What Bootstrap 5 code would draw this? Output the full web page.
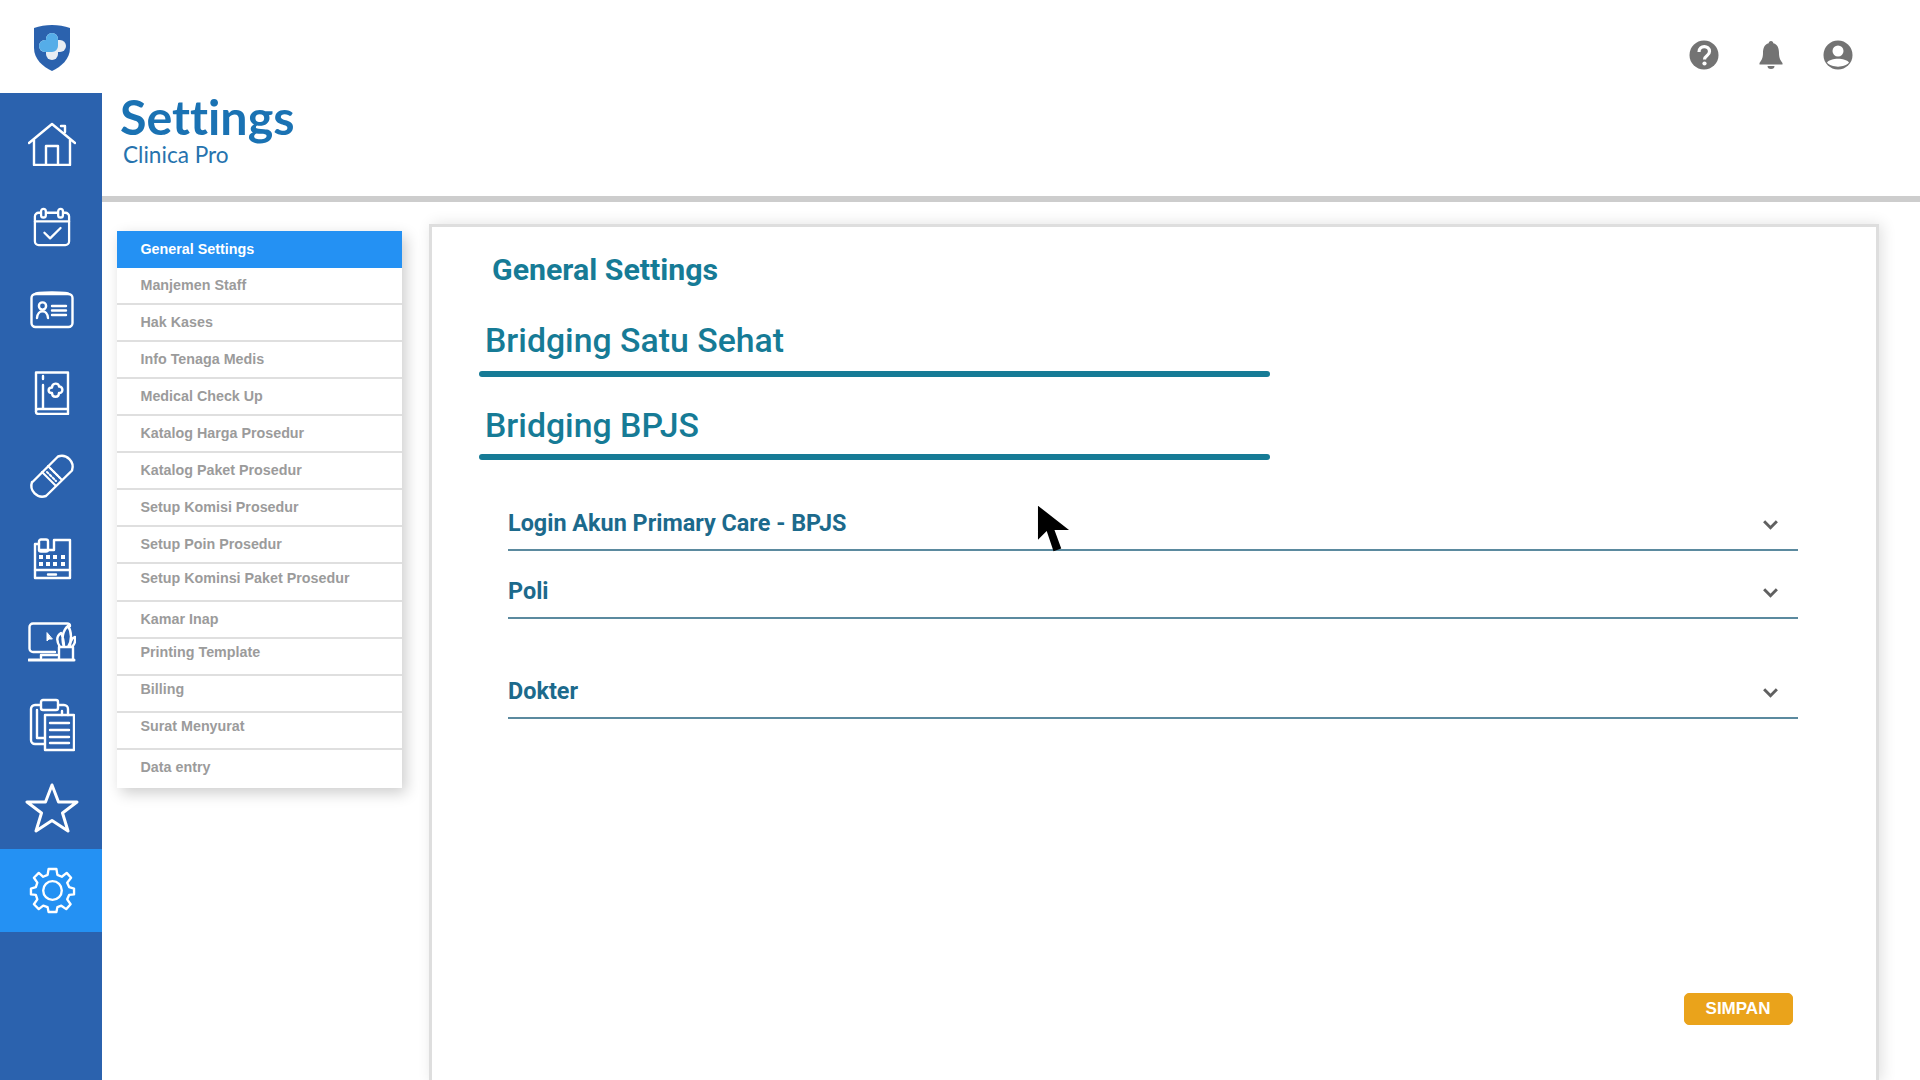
<!DOCTYPE html>
<html lang="id">
<head>
    <meta charset="UTF-8">
    <meta name="viewport" content="width=device-width, initial-scale=1.0">
    <title>Clinica Pro | Settings</title>
    <link href="https://cdn.jsdelivr.net/npm/bootstrap@5.3.0/dist/css/bootstrap.min.css" rel="stylesheet">
    <style>
        body {
            background: #fff;
            font-family: "Liberation Sans", Arial, sans-serif;
        }

        .app-shell {
            height: 1080px;
            overflow: hidden;
        }

        /* top bar */
        .top-bar {
            height: 93px;
        }

        .logo-box {
            width: 102px;
            padding-left: 1px;
        }

        .top-actions {
            gap: 40px;
            padding: 40px 67px 0 0;
        }

        /* left rail */
        .side-rail {
            width: 102px;
            background: #2b62ae;
            padding-top: 9px;
        }

        .rail-item {
            height: 83px;
            padding-left: 2px;
        }

        .rail-item.is-active {
            background: #2491f3;
        }

        .rail-item svg {
            fill: none;
            stroke: #fff;
            stroke-width: 2.4;
            stroke-linejoin: round;
            stroke-linecap: round;
        }

        /* page heading */
        .page-head {
            height: 103px;
            padding-left: 18px;
        }

        .page-title {
            font-family: Lato, sans-serif;
            font-weight: 700;
            font-size: 48.4px;
            line-height: 46px;
            font-variant-ligatures: none;
            color: #1a72b3;
            margin: 0 0 3px;
        }

        .page-sub {
            font-family: Lato, sans-serif;
            font-size: 22.6px;
            line-height: 26px;
            color: #2673ae;
            padding-left: 3px;
        }

        .head-rule {
            height: 6px;
            background: #cdcdcd;
        }

        /* settings menu */
        .settings-menu {
            width: 285px;
            margin: 29px 0 0 15px;
            align-self: flex-start;
            box-shadow: 4px 5px 14px rgba(0, 0, 0, .2);
            --bs-list-group-border-radius: 0;
            --bs-list-group-border-color: #dfdfdf;
        }

        .settings-menu .list-group-item {
            height: 37px;
            padding: 0 0 0 23.5px;
            display: flex;
            align-items: center;
            font-size: 14.3px;
            font-weight: 700;
            color: #9b9b9b;
            border-width: 0 0 2px 0;
        }

        .settings-menu .list-group-item:last-child {
            height: 38px;
            border-bottom: 0;
            padding-bottom: 3px;
        }

        .settings-menu .list-group-item.active {
            background: #2491f3;
            color: #fff;
            border-color: #2491f3;
            padding-top: 2px;
        }

        .settings-menu .list-group-item.item-tall {
            height: 38px;
            padding-bottom: 6px;
        }

        .settings-menu .list-group-item.item-high {
            padding-bottom: 7px;
        }

        /* main panel */
        .main-panel {
            width: 1450px;
            height: 858px;
            margin: 22px 0 0 27px;
            padding: 0 60px 57px 47px;
            border: 3px solid #dedede;
            border-bottom: 0;
            box-shadow: 3px 0 14px rgba(0, 0, 0, .12);
            position: relative;
        }

        .panel-title {
            font-family: Roboto, sans-serif;
            font-weight: 700;
            font-size: 30.3px;
            line-height: 34px;
            color: #167b96;
            margin: 26px 0 0 13px;
        }

        .bridge-title {
            font-family: Roboto, sans-serif;
            font-weight: 500;
            font-size: 33.8px;
            line-height: 40px;
            color: #167b96;
            margin: 0 0 0 6px;
        }

        .bridge-bar {
            width: 791px;
            height: 6px;
            border-radius: 3px;
            background: #167b96;
            margin-top: 10px;
        }

        .bridge-block {
            margin-top: 34px;
        }

        .bridge-block + .bridge-block {
            margin-top: 29px;
        }

        .bridge-block + .bridge-block .bridge-bar {
            margin-top: 8px;
        }

        .set-accordion {
            margin: 22.5px 0 0 29px;
            width: 1290px;
            --bs-accordion-border-width: 0;
            --bs-accordion-border-radius: 0;
            --bs-accordion-inner-border-radius: 0;
            --bs-accordion-btn-padding-x: 0;
            --bs-accordion-btn-padding-y: 0;
            --bs-accordion-btn-color: #1c6a8c;
            --bs-accordion-active-color: #1c6a8c;
            --bs-accordion-active-bg: #fff;
            --bs-accordion-btn-focus-box-shadow: none;
            --bs-accordion-btn-icon-width: 17px;
            --bs-accordion-btn-icon: url("data:image/svg+xml,%3csvg xmlns='http://www.w3.org/2000/svg' viewBox='0 0 16 16'%3e%3cpath fill='none' stroke='%23606060' stroke-width='2.8' d='M2 5l6 6 6-6'/%3e%3c/svg%3e");
            --bs-accordion-btn-active-icon: url("data:image/svg+xml,%3csvg xmlns='http://www.w3.org/2000/svg' viewBox='0 0 16 16'%3e%3cpath fill='none' stroke='%23606060' stroke-width='2.8' d='M2 5l6 6 6-6'/%3e%3c/svg%3e");
        }

        .set-accordion .accordion-button {
            height: 68px;
            font-family: Roboto, sans-serif;
            font-weight: 700;
            font-size: 23.4px;
            padding: 17px 19px 0 0;
            border-bottom: 2px solid #5b8a9f;
            box-shadow: none;
        }

        .set-accordion .accordion-item.item-gap {
            margin-top: 32px;
        }

        .save-btn {
            --bs-btn-bg: #eaa31b;
            --bs-btn-border-color: #eaa31b;
            --bs-btn-color: #fff;
            --bs-btn-hover-bg: #d8950f;
            --bs-btn-hover-border-color: #d8950f;
            --bs-btn-hover-color: #fff;
            width: 109px;
            height: 32px;
            padding: 0;
            font-weight: 700;
            font-size: 17px;
            border-radius: 5px;
            margin-right: 23.5px;
        }

        .mouse-cursor {
            position: absolute;
            left: 605px;
            top: 278px;
        }
    </style>
</head>
<body>
<div class="app-shell d-flex flex-column">
    <!-- top bar -->
    <header class="top-bar d-flex flex-shrink-0">
        <div class="logo-box d-flex justify-content-center align-items-start pt-4">
            <svg width="38" height="48" viewBox="0 0 38 48">
                <path d="M1 4C12 0 26 0 37 4V24C37 35 28 43 19 47 10 43 1 35 1 24Z" fill="#2b62ae"/>
                <rect x="6" y="16" width="27" height="12" rx="6" fill="#e8edf3"/>
                <rect x="13" y="9" width="12" height="27" rx="6" fill="#e8edf3"/>
                <path d="M12 28a6 6 0 0 1 0-12h1V15a6 6 0 0 1 12 0V22a6 6 0 0 1-6 6Z" fill="#55ade8"/>
            </svg>
        </div>
        <div class="top-actions d-flex ms-auto align-items-center align-self-start">
            <svg width="30" height="30" viewBox="0 0 30 30">
                <circle cx="15" cy="15" r="14.5" fill="#737373"/>
                <path d="M10 12c0-7 10.5-7 10.5-.5 0 4.5-5 4-5 8" fill="none" stroke="#fff" stroke-width="3.2"/>
                <circle cx="15.5" cy="23.5" r="2.1" fill="#fff"/>
            </svg>
            <svg width="24" height="30" viewBox="0 0 24 30">
                <path d="M12 1c1.500 0 2.300 1 2.300 2.300C19 4.500 20 9 20 13c0 5 1.500 7.500 3.500 10v1.500H.5V23C2.500 20.500 4 18 4 13c0-4 1-8.500 5.700-9.700C9.700 2 10.500 1 12 1Z" fill="#737373"/>
                <path d="M8.500 26h7a3.500 3 0 0 1-7 0Z" fill="#737373"/>
            </svg>
            <svg width="30" height="30" viewBox="0 0 30 30">
                <circle cx="15" cy="15" r="14.5" fill="#737373"/>
                <circle cx="15" cy="11" r="5.5" fill="#fff"/>
                <path d="M4 22.500C8 17.500 22 17.500 26 22.500 22 28 8 28 4 22.500Z" fill="#fff"/>
            </svg>
        </div>
    </header>

    <div class="d-flex flex-grow-1">
        <!-- left rail -->
        <nav class="side-rail flex-shrink-0">
            <div class="rail-item d-flex align-items-center justify-content-center">
                <svg width="48" height="44" viewBox="0 0 48 44">
                    <path d="M1 21 24 2 47 21M6 18V43H42V18M37 10V4H33"/>
                    <path d="M18 43V24H30V43"/>
                </svg>
            </div>
            <div class="rail-item d-flex align-items-center justify-content-center">
                <svg width="38" height="40" viewBox="0 0 40 42">
                    <rect x="2" y="6" width="36" height="34" rx="4"/>
                    <path d="M2 15H38"/>
                    <rect x="8.5" y="2" width="5" height="9" rx="2.5" fill="#2b62ae"/>
                    <rect x="26.5" y="2" width="5" height="9" rx="2.5" fill="#2b62ae"/>
                    <path d="M12 27l6 6 11-11"/>
                </svg>
            </div>
            <div class="rail-item d-flex align-items-center justify-content-center">
                <svg width="44" height="38" viewBox="0 0 44 38">
                    <rect x="1.5" y="3" width="41" height="33" rx="4"/>
                    <path d="M5 3C6 1 38 1 39 3"/>
                    <circle cx="12.5" cy="15" r="3.6"/>
                    <path d="M7 27c.5-9 10.500-9 11 0M22 15H36M22 19.500H36M22 24H36"/>
                </svg>
            </div>
            <div class="rail-item d-flex align-items-center justify-content-center">
                <svg width="36" height="44" viewBox="0 0 36 44">
                    <path d="M2 1.500H34V38H4.500C1 38 1 43 4.500 43H34V38M2 1.500V40"/>
                    <path d="M9 14V37M9 5V8"/>
                    <path d="M18 16.500c0-5 7-5 7-1 4-.5 5 6.500 0 6.500 0 5-7 5-7 0-4.500 0-4.500-5.500 0-5.500Z"/>
                </svg>
            </div>
            <div class="rail-item d-flex align-items-center justify-content-center">
                <svg width="50" height="50" viewBox="0 0 50 50">
                    <path d="M5.500 31 31 5.500a11 11 0 0 1 14 14L19 45a11 11 0 0 1-14-14Z"/>
                    <path d="M15 21 29 35M21 15 35 29" stroke-width="2"/>
                    <path d="M20 21 29 30M23.500 17.500 32.500 26.500" stroke-dasharray="2 2" stroke-width="2"/>
                </svg>
            </div>
            <div class="rail-item d-flex align-items-center justify-content-center">
                <svg width="40" height="42" viewBox="0 0 40 42">
                    <path d="M7 6H3V40H38V2H22V12H7"/>
                    <rect x="7" y="1.5" width="9" height="12" rx="2"/>
                    <path d="M3 32H38M16 36.500H24"/>
                    <g fill="#fff" stroke="none">
                        <rect x="7" y="17" width="4" height="4"/><rect x="14" y="17" width="4" height="4"/><rect x="21" y="17" width="4" height="4"/><rect x="29" y="17" width="4" height="4"/>
                        <rect x="7" y="24" width="4" height="4"/><rect x="14" y="24" width="4" height="4"/><rect x="21" y="24" width="4" height="4"/><rect x="29" y="24" width="4" height="4"/>
                    </g>
                </svg>
            </div>
            <div class="rail-item d-flex align-items-center justify-content-center">
                <svg width="48" height="40" viewBox="0 0 48 40">
                    <path d="M27 30H5a3.500 3.500 0 0 1-3.500-3.500V5A3.500 3.500 0 0 1 5 1.500H39C41 1.500 42 2.500 42 4"/>
                    <path d="M1 38H46" stroke-width="3"/>
                    <path d="M13 36V33H29"/>
                    <path d="M19 11v8l2-2 3 0Z" fill="#fff" stroke-width="1"/>
                    <path d="M31 37V25H45V37M32 25c-5-8-2-12 1-14 2 4 3 9 3 14M36 25c-3-8-1-17 4-21 4 6 4 15 0 21M42 25c0-5 2-9 5-10 1 5-1 8-3 10"/>
                </svg>
            </div>
            <div class="rail-item d-flex align-items-center justify-content-center">
                <svg width="46" height="54" viewBox="0 0 46 54">
                    <path d="M11 7H6a4 4 0 0 0-4 4V42a4 4 0 0 0 4 4H15M8 12V40H15M30 7h5a4 4 0 0 1 4 4V17M33 13V17"/>
                    <rect x="12" y="2" width="17" height="10" rx="2"/>
                    <rect x="16" y="17" width="29" height="35"/>
                    <path d="M21 25H40M21 32H40M21 39H40M21 45H40"/>
                </svg>
            </div>
            <div class="rail-item d-flex align-items-center justify-content-center">
                <svg width="54" height="52" viewBox="0 0 54 52">
                    <path d="M27 3 33.500 20H52L37.500 31 43 49 27 38.500 11 49 16.500 31 2 20H20.500Z" stroke-width="3"/>
                </svg>
            </div>
            <div class="rail-item is-active d-flex align-items-center justify-content-center">
                <svg width="47" height="47" viewBox="0 0 48 48">
                    <circle cx="24" cy="24" r="9.5"/>
                    <path d="M20 2H28L29 8 33.500 10 38.500 6 43 11 39 16 41 20.500 46 22V28L41 28.500 39 33 42.500 38 38 43 33 39.500 29 41 28 46H20L19 41 14.500 39.500 10 43 5 38 8.500 33 7 28.500 2 28V22L7 20.500 8.500 16 5 11 10 6 14.500 10 19 8Z"/>
                </svg>
            </div>
        </nav>

        <!-- content -->
        <main class="flex-grow-1">
            <div class="page-head">
                <h1 class="page-title">Settings</h1>
                <div class="page-sub">Clinica Pro</div>
            </div>
            <div class="head-rule"></div>

            <div class="d-flex">
                <div class="settings-menu list-group flex-shrink-0">
                    <a href="#" class="list-group-item list-group-item-action active">General Settings</a>
                    <a href="#" class="list-group-item list-group-item-action">Manjemen Staff</a>
                    <a href="#" class="list-group-item list-group-item-action">Hak Kases</a>
                    <a href="#" class="list-group-item list-group-item-action">Info Tenaga Medis</a>
                    <a href="#" class="list-group-item list-group-item-action">Medical Check Up</a>
                    <a href="#" class="list-group-item list-group-item-action">Katalog Harga Prosedur</a>
                    <a href="#" class="list-group-item list-group-item-action">Katalog Paket Prosedur</a>
                    <a href="#" class="list-group-item list-group-item-action">Setup Komisi Prosedur</a>
                    <a href="#" class="list-group-item list-group-item-action">Setup Poin Prosedur</a>
                    <a href="#" class="list-group-item list-group-item-action item-tall">Setup Kominsi Paket Prosedur</a>
                    <a href="#" class="list-group-item list-group-item-action">Kamar Inap</a>
                    <a href="#" class="list-group-item list-group-item-action item-high">Printing Template</a>
                    <a href="#" class="list-group-item list-group-item-action item-high">Billing</a>
                    <a href="#" class="list-group-item list-group-item-action item-high">Surat Menyurat</a>
                    <a href="#" class="list-group-item list-group-item-action">Data entry</a>
                </div>

                <section class="main-panel d-flex flex-column flex-shrink-0">
                    <h2 class="panel-title">General Settings</h2>

                    <div class="bridge-block">
                        <h3 class="bridge-title">Bridging Satu Sehat</h3>
                        <div class="bridge-bar"></div>
                    </div>
                    <div class="bridge-block">
                        <h3 class="bridge-title">Bridging BPJS</h3>
                        <div class="bridge-bar"></div>
                    </div>

                    <div class="accordion set-accordion" id="bpjsAccordion">
                        <div class="accordion-item">
                            <button class="accordion-button collapsed" type="button" data-bs-toggle="collapse" data-bs-target="#loginBody">Login Akun Primary Care - BPJS</button>
                            <div id="loginBody" class="accordion-collapse collapse" data-bs-parent="#bpjsAccordion"></div>
                        </div>
                        <div class="accordion-item">
                            <button class="accordion-button collapsed" type="button" data-bs-toggle="collapse" data-bs-target="#poliBody">Poli</button>
                            <div id="poliBody" class="accordion-collapse collapse" data-bs-parent="#bpjsAccordion"></div>
                        </div>
                        <div class="accordion-item item-gap">
                            <button class="accordion-button collapsed" type="button" data-bs-toggle="collapse" data-bs-target="#dokterBody">Dokter</button>
                            <div id="dokterBody" class="accordion-collapse collapse" data-bs-parent="#bpjsAccordion"></div>
                        </div>
                    </div>

                    <div class="d-flex justify-content-end mt-auto">
                        <button class="btn save-btn" type="button">SIMPAN</button>
                    </div>

                    <!-- mouse pointer caught in the screenshot -->
                    <svg class="mouse-cursor" width="33" height="48" viewBox="0 0 34 48">
                        <path d="M1 0V35L10 26 17 47 25 44 18 25H33Z" fill="#000"/>
                    </svg>
                </section>
            </div>
        </main>
    </div>
</div>
<script src="https://cdn.jsdelivr.net/npm/bootstrap@5.3.0/dist/js/bootstrap.bundle.min.js"></script>
</body>
</html>
